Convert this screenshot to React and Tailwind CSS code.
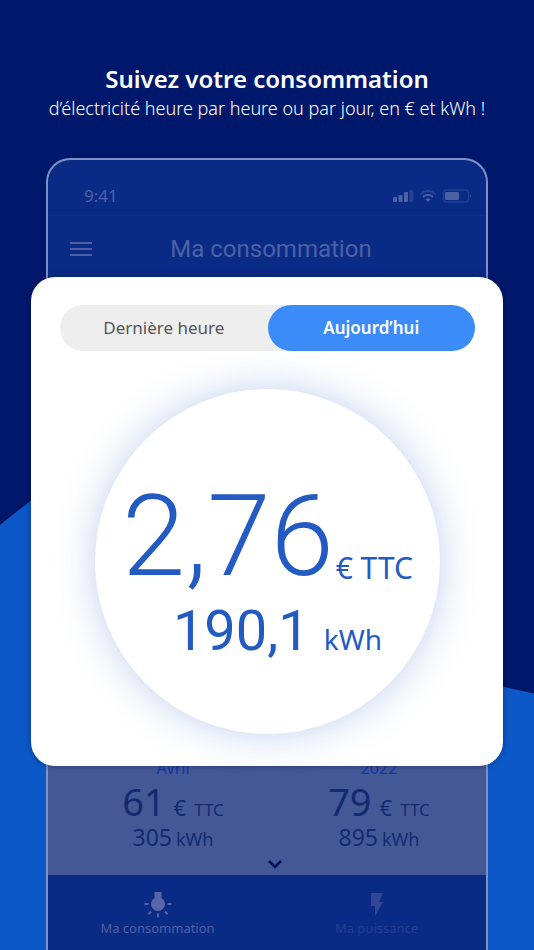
import { useState } from "react";

const TOTALS = [
  { label: "Avril", price: "61", energy: "305" },
  { label: "2022", price: "79", energy: "895" },
];

const TABS = ["Dernière heure", "Aujourd’hui"];

function Backdrop() {
  return (
    <svg
      className="absolute inset-0 w-full h-full"
      viewBox="0 0 534 950"
      preserveAspectRatio="none"
      aria-hidden="true"
    >
      <defs>
        <filter id="waveShadow" x="-10%" y="-10%" width="120%" height="120%">
          <feDropShadow dx="0" dy="0" stdDeviation="3" floodColor="#000b40" floodOpacity="0.4" />
        </filter>
      </defs>
      <path
        d="M-20 542 Q15 511 60 480 C180 560 330 650 480 682 Q510 688 554 698 V970 H-20 Z"
        fill="#1058c8"
        filter="url(#waveShadow)"
      />
    </svg>
  );
}

function StatusIcons() {
  return (
    <svg width="80" height="14" viewBox="0 0 80 14" fill="#4d60a4" aria-hidden="true">
      <rect x="1" y="8" width="4" height="5" rx="1" />
      <rect x="6.500" y="6" width="4" height="7" rx="1" />
      <rect x="12" y="3" width="4" height="10" rx="1" />
      <rect x="17.500" y="1" width="4" height="12" rx="1" opacity="0.4" />
      <g fill="none" stroke="#4d60a4" strokeWidth="2">
        <path d="M28.500 5.500 Q36 -1.500 43.500 5.500" opacity="0.5" />
        <path d="M31 8 Q36 3.500 41 8" />
      </g>
      <path d="M33.500 10.300 Q36 8 38.500 10.300 L36 13 Z" />
      <rect x="51.500" y="1" width="25" height="12" rx="3" fill="none" stroke="#4d60a4" opacity="0.5" />
      <rect x="53" y="3" width="14" height="8" rx="1" />
      <path d="M78 5 Q80 7 78 9 Z" opacity="0.6" />
    </svg>
  );
}

function BulbIcon() {
  return (
    <svg width="28" height="26" viewBox="0 0 28 26" fill="#5567a8" aria-hidden="true">
      <path d="M10.500 0 H17.500 V6 A7 7 0 1 1 10.500 6 Z" />
      <g stroke="#5567a8" strokeWidth="2">
        <path d="M0.500 12 H4.500 M23.500 12 H27.500 M14 21.500 V25.500 M7 19.500 L4.500 22 M21 19.500 L23.500 22" />
      </g>
    </svg>
  );
}

function BoltIcon() {
  return (
    <svg width="14" height="26" viewBox="0 0 14 26" fill="#324794" aria-hidden="true">
      <path d="M1 1 H13 L9 10 H13 L5 24 V14 H1 Z" />
    </svg>
  );
}

function Total({ label, price, energy }) {
  return (
    <div className="flex flex-col items-center text-[#132a71]">
      <p className="text-base leading-5 text-[#1039a8]">{label}</p>
      <p className="flex items-baseline gap-2 text-[38px] leading-10 mt-[3px]">
        {price}
        <span className="text-[22px] leading-none">€</span>
        <span className="text-[17px] leading-none">TTC</span>
      </p>
      <p className="flex items-baseline gap-1 text-[23px] leading-8">
        {energy}
        <span className="text-lg leading-none">kWh</span>
      </p>
    </div>
  );
}

export default function App() {
  const [tab, setTab] = useState(TABS[1]);

  return (
    <main className="relative min-h-screen overflow-hidden flex flex-col bg-[#00186c] font-['Noto_Sans',sans-serif]">
      <Backdrop />

      <header className="relative pt-[63px] pb-9 text-center text-white">
        <h1 className="text-2xl leading-8 font-semibold">Suivez votre consommation</h1>
        <p className="text-lg leading-[27px] font-light whitespace-nowrap">
          d’électricité heure par heure ou par jour, en € et kWh !
        </p>
      </header>

      <section className="relative mx-[46px] grow flex flex-col rounded-t-3xl border-2 border-b-0 border-[#8090c3] bg-[#0a2b85]">
        <div className="flex justify-between items-center h-14 pl-9 pr-3.5 pt-4 border-b border-[#102f89] text-[#4d60a4]">
          <span className="text-[17px]">9:41</span>
          <StatusIcons />
        </div>
        <div className="relative flex items-center justify-center h-[61px] pt-1 text-[#4d60a4]">
          <button aria-label="Menu" className="absolute left-[22px] flex flex-col gap-1">
            <span className="w-[22px] h-0.5 bg-[#4d60a4]" />
            <span className="w-[22px] h-0.5 bg-[#4d60a4]" />
            <span className="w-[22px] h-0.5 bg-[#4d60a4]" />
          </button>
          <h2 className="font-[Roboto,sans-serif] text-2xl pl-2">Ma consommation</h2>
        </div>

        <div className="relative z-10 -mx-[17px] pl-[29px] pr-7 pt-7 pb-8 rounded-3xl bg-white shadow-[0_0_6px_rgba(0,11,64,0.4)]">
          <div className="flex rounded-full bg-[#eeeeee]">
            {TABS.map((name) => (
              <button
                key={name}
                onClick={() => setTab(name)}
                className={`flex-1 h-[46px] rounded-full text-[17px] ${
                  tab === name ? "bg-[#3b8bf8] text-white font-semibold" : "text-[#555555]"
                }`}
              >
                {name}
              </button>
            ))}
          </div>

          <div className="mx-auto mt-[38px] w-[345px] h-[345px] rounded-full bg-white shadow-[0_0_40px_rgba(35,91,195,0.28)] flex flex-col items-center pt-[90px] text-[#235bc3] whitespace-nowrap">
            <p className="flex items-end gap-0.5 font-light font-[Roboto,sans-serif] text-[114px] leading-[114px]">
              2,76
              <span className="text-3xl leading-[50px] font-normal font-['Noto_Sans',sans-serif]">€ TTC</span>
            </p>
            <p className="flex items-baseline gap-3.5 mt-1.5 ml-5 font-[Roboto,sans-serif] text-[56px] leading-[64px]">
              190,1
              <span className="text-[28px] font-['Noto_Sans',sans-serif]">kWh</span>
            </p>
          </div>
        </div>

        <div className="relative -mt-2 h-[117px] grid grid-cols-2 pl-[22px] pr-1 bg-[#455896]">
          {TOTALS.map((total) => (
            <Total key={total.label} {...total} />
          ))}
          <svg className="absolute bottom-1.5 left-[220px]" width="14" height="9" viewBox="0 0 14 9" aria-hidden="true">
            <path d="M1 1 L7 7 L13 1" fill="none" stroke="#020f5b" strokeWidth="2.500" />
          </svg>
        </div>

        <nav className="grow grid grid-cols-2 text-[13px] leading-5">
          <button className="h-[75px] flex flex-col items-center pt-[17px] text-[#4d60a4]">
            <BulbIcon />
            Ma consommation
          </button>
          <button className="h-[75px] flex flex-col items-center pt-[17px] text-[#253c8e]">
            <BoltIcon />
            Ma puissance
          </button>
        </nav>
      </section>
    </main>
  );
}
